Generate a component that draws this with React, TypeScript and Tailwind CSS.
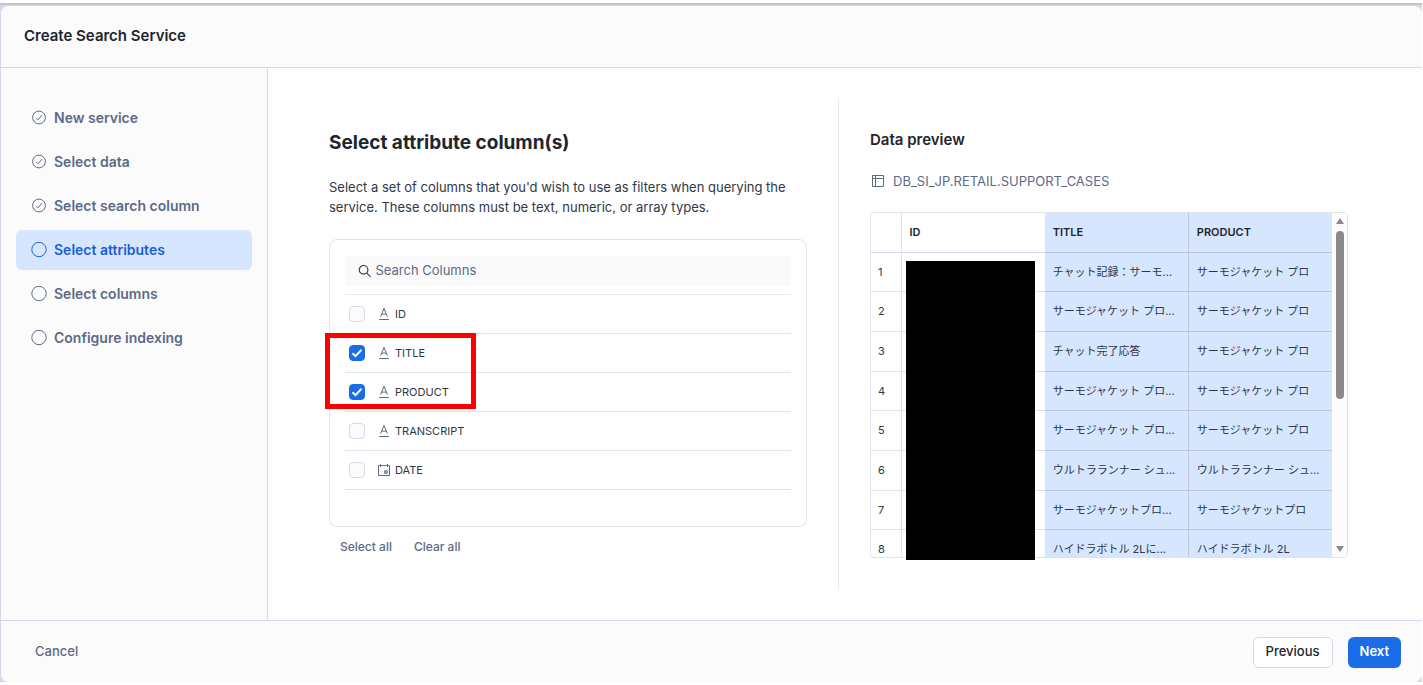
import { useState } from "react";
import clsx from "clsx";

type Step = { label: string; state: "done" | "active" | "todo" };
type ColumnType = "text" | "date";

const steps: Step[] = [
  { label: "New service", state: "done" },
  { label: "Select data", state: "done" },
  { label: "Select search column", state: "done" },
  { label: "Select attributes", state: "active" },
  { label: "Select columns", state: "todo" },
  { label: "Configure indexing", state: "todo" },
];

const columns: { name: string; type: ColumnType }[] = [
  { name: "ID", type: "text" },
  { name: "TITLE", type: "text" },
  { name: "PRODUCT", type: "text" },
  { name: "TRANSCRIPT", type: "text" },
  { name: "DATE", type: "date" },
];

const rows = [
  { title: "チャット記録：サーモ...", product: "サーモジャケット プロ" },
  { title: "サーモジャケット プロ...", product: "サーモジャケット プロ" },
  { title: "チャット完了応答", product: "サーモジャケット プロ" },
  { title: "サーモジャケット プロ...", product: "サーモジャケット プロ" },
  { title: "サーモジャケット プロ...", product: "サーモジャケット プロ" },
  { title: "ウルトラランナー シュ...", product: "ウルトラランナー シュ..." },
  { title: "サーモジャケットプロ...", product: "サーモジャケットプロ" },
  { title: "ハイドラボトル 2Lに...", product: "ハイドラボトル 2L" },
];

function StepIcon({ done }: { done: boolean }) {
  return (
    <svg viewBox="0 0 16 16" className="size-4 shrink-0" fill="none" stroke="currentColor">
      {done ? (
        <>
          <circle cx="8" cy="7.5" r="6.4" />
          <path d="M4.9 7.7 7 9.8l4-4.7" />
        </>
      ) : (
        <circle cx="8" cy="7.5" r="7.2" />
      )}
    </svg>
  );
}

function TypeIcon({ type }: { type: ColumnType }) {
  if (type === "date") {
    return (
      <svg viewBox="0 0 14 14" className="size-3.5 shrink-0" fill="none" stroke="currentColor">
        <path d="M4.2 2.5h5.6M2.8 2.5H1.5v10h11v-10h-1.3M3.5 1v3M10.5 1v3" />
        <circle cx="8.9" cy="9" r="1.4" strokeWidth="1.2" />
      </svg>
    );
  }
  return (
    <svg viewBox="0 0 14 14" className="size-3.5 shrink-0" fill="none" stroke="currentColor">
      <path d="M3.6 9.6 7 1.4l3.4 8.2M4.8 7.1h4.4M2.2 12.5h9.6" />
    </svg>
  );
}

function Sidebar() {
  return (
    <nav className="w-[267px] shrink-0 border-r border-[#d5daea] bg-[#fbfbfb] pt-[30px] pr-[15px] pl-[15px]">
      <ol className="space-y-1">
        {steps.map((step) => (
          <li
            key={step.label}
            aria-current={step.state === "active" ? "step" : undefined}
            className={clsx(
              "flex h-10 items-center gap-[7px] rounded-md px-[15px] text-sm font-semibold",
              step.state === "active" ? "bg-[#d6e6ff] text-[#1a5fd8]" : "text-[#5d6a85]"
            )}
          >
            <StepIcon done={step.state === "done"} />
            {step.label}
          </li>
        ))}
      </ol>
    </nav>
  );
}

function ColumnPicker() {
  const [selected, setSelected] = useState<string[]>(["TITLE", "PRODUCT"]);

  const toggle = (name: string) =>
    setSelected((prev) =>
      prev.includes(name) ? prev.filter((n) => n !== name) : [...prev, name]
    );

  return (
    <section className="min-w-0 flex-1 pt-8">
      <h2 className="text-[19px] leading-6 font-bold text-[#1e252f]">Select attribute column(s)</h2>
      <p className="mt-[22px] text-[13px] leading-5 text-[#303746]">
        Select a set of columns that you'd wish to use as filters when querying the service. These
        columns must be text, numeric, or array types.
      </p>

      <div className="mt-[22px] h-72 rounded-lg border border-[#dfe3ec] px-[15px] pt-4">
        <label className="flex h-[30px] items-center gap-1 bg-[#fafafa] pl-[13px] text-[#303746]">
          <svg viewBox="0 0 14 14" className="size-3.5" fill="none" stroke="currentColor" strokeWidth="1.2">
            <circle cx="5.8" cy="5.8" r="4.5" />
            <path d="m9.2 9.2 4 4" />
          </svg>
          <input
            type="text"
            aria-label="Search Columns"
            placeholder="Search Columns"
            className="w-full bg-transparent text-[13px] outline-none placeholder:text-[#5d6a85]"
          />
        </label>

        <div className="relative mt-2">
          <ul className="border-t border-[#e7eaf0]">
            {columns.map((col) => (
              <li key={col.name} className="h-[39px] border-b border-[#dfe3ec]">
                <label className="flex h-full items-center pl-1 text-[11px] text-[#303746]">
                  <input
                    type="checkbox"
                    checked={selected.includes(col.name)}
                    onChange={() => toggle(col.name)}
                    className="peer size-4 appearance-none rounded border border-[#d5daea] bg-[#fbfbfb] checked:border-[#1a6ce7] checked:bg-[#1a6ce7]"
                  />
                  <svg
                    viewBox="0 0 16 16"
                    className="pointer-events-none invisible -ml-4 size-4 peer-checked:visible"
                    fill="none"
                    stroke="white"
                    strokeWidth="2"
                  >
                    <path d="m3.5 8.3 3 2.8 6-6.3" />
                  </svg>
                  <span className="mr-1 ml-3 text-[#5d6a85]">
                    <TypeIcon type={col.type} />
                  </span>
                  {col.name}
                </label>
              </li>
            ))}
          </ul>
          {/* Highlight around the picked columns */}
          <div className="pointer-events-none absolute top-[39px] -left-5 h-[76px] w-[151px] border-[5px] border-[#fe0000]" />
        </div>
      </div>

      <div className="mt-3 flex gap-[22px] pl-[11px] text-xs leading-4 font-medium text-[#5d6a85]">
        <button type="button" onClick={() => setSelected(columns.map((c) => c.name))}>
          Select all
        </button>
        <button type="button" onClick={() => setSelected([])}>
          Clear all
        </button>
      </div>
    </section>
  );
}

function DataPreview() {
  return (
    <section className="min-w-0 flex-1 pt-[29px]">
      <h3 className="text-[15px] leading-6 font-semibold text-[#1e252f]">Data preview</h3>
      <div className="mt-[19px] flex items-center gap-2 pl-px text-[13px] leading-5 text-[#5d6a85]">
        <svg viewBox="0 0 14 14" className="size-3.5" fill="none" stroke="currentColor">
          <path d="M1.5 1.5h11v11h-11zM1.5 4.5h11M4.5 1.5v11" />
        </svg>
        DB_SI_JP.RETAIL.SUPPORT_CASES
      </div>

      <div className="relative mt-[21px]">
        <div className="flex h-[346px] overflow-hidden rounded border border-[#dfe3ec]">
          <div className="min-w-0 flex-1">
            <table className="h-[357px] w-full table-fixed border-collapse text-left text-[11px] text-[#303746]">
              <colgroup>
                <col className="w-[30px]" />
                <col />
                <col />
                <col />
              </colgroup>
              <thead>
                <tr className="h-[39px] border-b border-[#d5daea] text-[#1e252f]">
                  <th className="border-r border-[#dfe3ec]" />
                  <th className="px-2 font-semibold">ID</th>
                  <th className="border-r border-b border-[#c0c6d4] bg-[#d6e6ff] px-2 font-semibold">
                    TITLE
                  </th>
                  <th className="border-b border-[#c0c6d4] bg-[#d6e6ff] px-2 font-semibold">
                    PRODUCT
                  </th>
                </tr>
              </thead>
              <tbody>
                {rows.map((row, i) => (
                  <tr key={i} className="h-[39px] border-b border-[#dfe3ec]">
                    <td className="border-r border-[#dfe3ec] pl-[7px]">{i + 1}</td>
                    <td />
                    <td className="truncate border-r border-b border-[#c0c6d4] bg-[#d6e6ff] px-2">
                      {row.title}
                    </td>
                    <td className="truncate border-b border-[#c0c6d4] bg-[#d6e6ff] px-2">
                      {row.product}
                    </td>
                  </tr>
                ))}
              </tbody>
            </table>
          </div>
          <div className="flex w-[15px] flex-col items-center justify-between bg-[#fcfcfc] py-[5px]">
            <div className="flex flex-col items-center gap-[7px]">
              <svg viewBox="0 0 8 6" className="h-1.5 w-2 fill-[#8a8a8a]">
                <path d="M4 0 8 6H0z" />
              </svg>
              <div className="h-[168px] w-2 rounded-full bg-[#8a8a8a]" />
            </div>
            <svg viewBox="0 0 8 6" className="h-1.5 w-2 fill-[#8a8a8a]">
              <path d="M4 6 8 0H0z" />
            </svg>
          </div>
        </div>
        {/* Redacted ids */}
        <div className="absolute top-[49px] left-9 h-[299px] w-[129px] bg-black" />
      </div>
    </section>
  );
}

export default function App() {
  return (
    <div className="bg-white pt-[3px] pr-px font-['Inter','Noto_Sans_CJK_JP',sans-serif]">
      <div className="border-t-2 border-[#c4c4cc] bg-[#d5daea]">
        <div className="flex flex-col overflow-hidden rounded-lg border-t border-l border-[#d5daea] bg-[#fbfbfb]">
          <header className="flex h-[62px] items-center border-b border-[#d5daea] px-[23px]">
            <h1 className="text-[15px] font-semibold text-[#1e252f]">Create Search Service</h1>
          </header>

          <div className="flex">
            <Sidebar />
            <main className="flex min-w-0 flex-1 gap-[31px] bg-white pt-[31px] pr-[74px] pb-[31px] pl-[61px]">
              <ColumnPicker />
              <div className="h-[490px] w-px bg-[#dfe3ec]" />
              <DataPreview />
            </main>
          </div>

          <footer className="flex h-[62px] items-center border-t border-[#d5daea] pt-px pr-[21px] pl-[34px] text-[13px] font-medium">
            <button type="button" className="text-[#5d6a85]">
              Cancel
            </button>
            <button
              type="button"
              className="ml-auto h-[31px] rounded-md border border-[#d5daea] bg-white px-3 text-[#1e252f]"
            >
              Previous
            </button>
            <button
              type="button"
              className="ml-[15px] h-[31px] rounded-md bg-[#1a6ce7] px-3 font-semibold text-white"
            >
              Next
            </button>
          </footer>
        </div>
      </div>
    </div>
  );
}
